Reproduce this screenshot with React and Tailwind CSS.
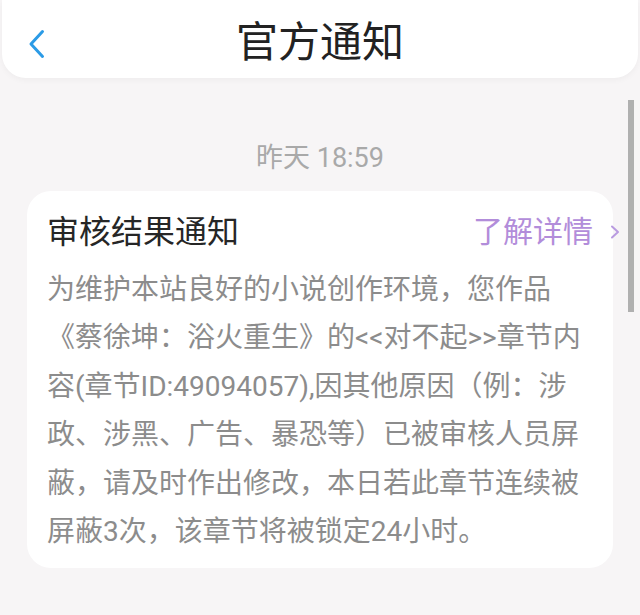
import React from "react";

const FONT = { fontFamily: 'Roboto, "Noto Sans CJK SC", "Noto Sans", sans-serif' };

const lines = [
  "为维护本站良好的小说创作环境，您作品",
  "《蔡徐坤：浴火重生》的<<对不起>>章节内",
  "容(章节ID:49094057),因其他原因（例：涉",
  "政、涉黑、广告、暴恐等）已被审核人员屏",
  "蔽，请及时作出修改，本日若此章节连续被",
  "屏蔽3次，该章节将被锁定24小时。",
];

export default function App() {
  return (
    <div
      className="relative w-[640px] h-[615px] overflow-hidden bg-[#f7f5f6]"
      style={FONT}
    >
      <header className="relative mx-[2px] h-[78px] pt-[8px] bg-white rounded-b-[24px] shadow-[0_2px_6px_rgba(0,0,0,0.04)] flex items-center justify-center">
        <svg
          className="absolute left-[25px] top-[29px]"
          width="20"
          height="30"
          viewBox="0 0 20 30"
          fill="none"
        >
          <path
            d="M15.5 2.5 L4 15 L15.5 27.5"
            stroke="#2b9be6"
            strokeWidth="3"
            strokeLinecap="round"
            strokeLinejoin="round"
          />
        </svg>
        <h1 className="text-[42px] leading-[50px] text-[#222222] font-normal">
          官方通知
        </h1>
      </header>

      <div className="mt-[63px] text-center text-[27px] leading-[34px] text-[#a9a9a9]">
        昨天 18:59
      </div>

      <div className="mx-[27px] mt-[16px] bg-white rounded-[24px] pl-[20px] pr-[20px] pt-[21px] pb-[12px]">
        <div className="flex items-center justify-between h-[40px]">
          <span className="text-[32px] leading-[40px] text-[#262626]">审核结果通知</span>
          <span className="flex items-center mr-[-27px]">
            <span className="text-[30px] leading-[40px] text-[#b28dda]">了解详情</span>
            <svg className="ml-[17px]" width="10" height="14" viewBox="0 0 10 14" fill="none">
              <path
                d="M2 1.5 L8 7 L2 12.5"
                stroke="#b99be0"
                strokeWidth="2"
                strokeLinecap="round"
                strokeLinejoin="round"
              />
            </svg>
          </span>
        </div>
        <div className="mt-[14px] text-[28px] leading-[48.4px] text-[#8c8c8c]">
          {lines.map((l, i) => (
            <div key={i} className="whitespace-nowrap">
              {l}
            </div>
          ))}
        </div>
      </div>

      <div className="absolute left-[628px] top-[100px] w-[6px] h-[212px] bg-[#b0b0b0]" />
    </div>
  );
}
